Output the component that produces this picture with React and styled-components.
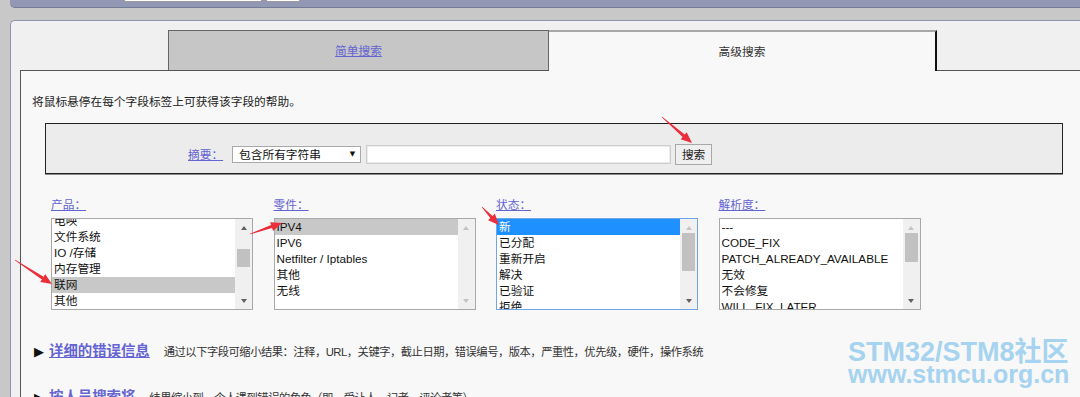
import React from 'react';
import styled, { createGlobalStyle } from 'styled-components';

const GlobalStyle = createGlobalStyle`
  html, body {
    margin: 0;
    padding: 0;
  }
  body {
    background: #c8c8c8;
    font-family: "Liberation Sans", "Noto Sans CJK SC", sans-serif;
    font-size: 11.7px;
    color: #222;
    overflow: hidden;
  }
`;

const Page = styled.div`
  position: relative;
  width: 1080px;
  height: 397px;
  overflow: hidden;
  padding-left: 10px;
  box-sizing: border-box;
`;

const TopBar = styled.div`
  height: 7px;
  background: #9298b4;
  border-bottom: 1px solid #747b97;
  border-bottom-left-radius: 5px;
  display: flex;
  align-items: flex-start;
  gap: 4px;
  padding-left: 114px;
`;

const BarField = styled.div`
  width: ${p => p.$w}px;
  height: 1px;
  background: #fff;
  border: 1px solid #9c9c9c;
  border-top: none;
`;

const Panel = styled.div`
  margin-top: 12px;
  background: #f0f0f0;
  border-top: 1px solid #8c94ae;
  border-left: 1px solid #8c94ae;
  border-top-left-radius: 5px;
  padding: 9px 0 0 9px;
  height: 400px;
`;

const Tabs = styled.div`
  display: flex;
  margin-left: 148px;
  height: 40px;
`;

const Tab = styled.div`
  position: relative;
  z-index: ${p => (p.$active ? 1 : 0)};
  box-sizing: border-box;
  width: ${p => (p.$active ? 388 : 381)}px;
  height: ${p => (p.$active ? 41 : 40)}px;
  display: flex;
  align-items: center;
  justify-content: center;
  background: ${p => (p.$active ? '#f8f8f8' : '#c6c6c6')};
  border-top: ${p => (p.$active ? '2px solid #a8a8a8' : '1px solid #666')};
  border-left: ${p => (p.$active ? 'none' : '1px solid #666')};
  border-right: ${p => (p.$active ? '2px solid #111' : '1px solid #666')};
  color: #333;
  line-height: 16px;
`;

const Link = styled.a`
  color: #6464d2;
  text-decoration: underline;
  cursor: pointer;
`;

const Content = styled.div`
  background: #f8f8f8;
  border-top: 1px solid #555;
  border-left: 1px solid #555;
  padding-top: 23px;
  height: 340px;
`;

const Help = styled.p`
  margin: 0 0 13px 11px;
  line-height: 16px;
  color: #222;
`;

const SummaryBox = styled.div`
  box-sizing: border-box;
  margin-left: 24px;
  width: 1018px;
  height: 51px;
  background: #ececec;
  border: 1px solid #222;
  box-shadow: 0 1px 0 #8a8a8a;
  padding: 12px 0 0 142px;
  display: flex;
  align-items: center;
`;

const FieldLabel = styled(Link)`
  line-height: 16px;
`;

const Select = styled.div`
  box-sizing: border-box;
  margin-left: 9px;
  width: 129px;
  height: 17px;
  background: #fff;
  border: 1px solid #a9a9a9;
  display: flex;
  align-items: center;
  justify-content: space-between;
  padding: 0 5px 0 6px;
  line-height: 15px;
  color: #111;
`;

const Caret = styled.span`
  font-family: "DejaVu Sans", sans-serif;
  font-size: 7px;
  color: #111;
`;

const TextInput = styled.div`
  box-sizing: border-box;
  margin-left: 5px;
  width: 305px;
  height: 19px;
  background: #fff;
  border: 1px solid #cdcdcd;
  box-shadow: inset 0 0 0 1px #ececec;
`;

const Button = styled.div`
  box-sizing: border-box;
  margin-left: 4px;
  width: 37px;
  height: 21px;
  background: #efefef;
  border: 1px solid #a8a8a8;
  display: flex;
  align-items: center;
  justify-content: center;
  color: #222;
  line-height: 16px;
`;

const Fields = styled.div`
  display: grid;
  grid-template-columns: repeat(4, 202px);
  column-gap: 20.5px;
  margin: 23px 0 0 30px;
`;

const Field = styled.div`
  display: flex;
  flex-direction: column;
  gap: 5px;
`;

const ListBox = styled.div`
  box-sizing: border-box;
  width: 202px;
  height: 92px;
  background: #fff;
  border: 1px solid ${p => (p.$focused ? '#6fa6e6' : '#a9a9a9')};
  display: flex;
  overflow: hidden;
`;

const Options = styled.div`
  flex: 1;
  overflow: hidden;
`;

const OptionList = styled.div`
  margin-top: ${p => p.$offset}px;
`;

const Option = styled.div`
  height: 16px;
  line-height: 16px;
  padding-left: 2px;
  white-space: nowrap;
  color: ${p => (p.$sel === 'focus' ? '#fff' : '#111')};
  background: ${p =>
    p.$sel === 'focus' ? '#1e90ff' : p.$sel === 'blur' ? '#c8c8c8' : 'transparent'};
`;

const ScrollBar = styled.div`
  width: 17px;
  background: #f0f0f0;
  display: flex;
  flex-direction: column;
`;

const ScrollButton = styled.div`
  height: 17px;
  display: flex;
  align-items: center;
  justify-content: center;
`;

const ScrollTrack = styled.div`
  flex: 1;
`;

const Thumb = styled.div`
  margin: ${p => p.$top}px 2px 0;
  height: ${p => p.$h}px;
  background: #c1c1c1;
`;

const ArrowGlyph = styled.span`
  width: 0;
  height: 0;
  border-left: 3.5px solid transparent;
  border-right: 3.5px solid transparent;
  ${p =>
    p.$dir === 'up'
      ? `border-bottom: 4px solid ${p.$on ? '#606060' : '#c3c3c3'};`
      : `border-top: 4px solid ${p.$on ? '#606060' : '#c3c3c3'};`}
`;

const Section = styled.div`
  display: flex;
  align-items: baseline;
  margin: ${p => p.$mt}px 0 0 13px;
  line-height: 20px;
  white-space: nowrap;
`;

const Bullet = styled.span`
  font-family: "DejaVu Sans", sans-serif;
  font-size: 13px;
  color: #111;
  margin-right: 5px;
`;

const SectionTitle = styled(Link)`
  font-size: 14.4px;
  font-weight: bold;
  margin-right: 14px;
`;

const SectionText = styled.span`
  font-size: 11.3px;
  letter-spacing: -0.5px;
  color: #333;
`;

const Watermark = styled.div`
  position: absolute;
  left: 848px;
  top: 340px;
  color: #a6d3ef;
  font-family: "Liberation Sans", "Noto Sans CJK SC", sans-serif;
  font-weight: bold;
  pointer-events: none;
`;

const WatermarkLine = styled.div`
  font-size: ${p => p.$size}px;
  line-height: ${p => p.$lh}px;
  white-space: nowrap;
`;

const Overlay = styled.svg`
  position: absolute;
  left: 0;
  top: 0;
  pointer-events: none;
`;

function arrowPoints([x1, y1], [x2, y2]) {
  const dx = x2 - x1;
  const dy = y2 - y1;
  const len = Math.hypot(dx, dy);
  const ux = dx / len;
  const uy = dy / len;
  const px = -uy;
  const py = ux;
  const head = 11;
  const bx = x2 - ux * head;
  const by = y2 - uy * head;
  const pt = (x, y, w) => `${(x + px * w).toFixed(1)},${(y + py * w).toFixed(1)}`;
  return [
    pt(x1, y1, 0.3),
    pt(bx, by, 1.6),
    pt(bx, by, 4.6),
    `${x2},${y2}`,
    pt(bx, by, -4.6),
    pt(bx, by, -1.6),
    pt(x1, y1, -0.3),
  ].join(' ');
}

const arrows = [
  [[662, 117], [692, 143]],
  [[15, 260], [52, 284]],
  [[250, 234], [282, 223]],
  [[482, 207], [499, 225]],
];

const lists = [
  {
    label: '产品：',
    items: ['电唤', '文件系统', 'IO /存储', '内存管理', '联网', '其他', '平台'],
    sel: 4,
    selType: 'blur',
    offset: -6,
    thumb: { top: 13, h: 18 },
    up: true,
    down: true,
  },
  {
    label: '零件：',
    items: ['IPV4', 'IPV6', 'Netfilter / Iptables', '其他', '无线'],
    sel: 0,
    selType: 'blur',
    offset: 0,
    thumb: null,
    up: false,
    down: false,
  },
  {
    label: '状态：',
    items: ['新', '已分配', '重新开启', '解决', '已验证', '拒绝'],
    sel: 0,
    selType: 'focus',
    offset: 0,
    thumb: { top: -3, h: 38 },
    up: false,
    down: true,
    focused: true,
  },
  {
    label: '解析度：',
    items: ['---', 'CODE_FIX', 'PATCH_ALREADY_AVAILABLE', '无效', '不会修复', 'WILL_FIX_LATER'],
    sel: -1,
    offset: 0,
    thumb: { top: -3, h: 29 },
    up: false,
    down: true,
  },
];

const MultiSelect = ({ list }) => (
  <ListBox $focused={list.focused}>
    <Options>
      <OptionList $offset={list.offset}>
        {list.items.map((item, i) => (
          <Option key={item} $sel={i === list.sel ? list.selType : null}>
            {item}
          </Option>
        ))}
      </OptionList>
    </Options>
    <ScrollBar>
      <ScrollButton>
        <ArrowGlyph $dir="up" $on={list.up} />
      </ScrollButton>
      <ScrollTrack>
        {list.thumb && <Thumb $top={list.thumb.top} $h={list.thumb.h} />}
      </ScrollTrack>
      <ScrollButton>
        <ArrowGlyph $dir="down" $on={list.down} />
      </ScrollButton>
    </ScrollBar>
  </ListBox>
);

export default function App() {
  return (
    <>
      <GlobalStyle />
      <Page>
        <TopBar>
          <BarField $w={136} />
          <BarField $w={32} />
        </TopBar>
        <Panel>
          <Tabs>
            <Tab>
              <Link>简单搜索</Link>
            </Tab>
            <Tab $active>高级搜索</Tab>
          </Tabs>
          <Content>
            <Help>将鼠标悬停在每个字段标签上可获得该字段的帮助。</Help>
            <SummaryBox>
              <FieldLabel>摘要：</FieldLabel>
              <Select>
                <span>包含所有字符串</span>
                <Caret>▼</Caret>
              </Select>
              <TextInput />
              <Button>搜索</Button>
            </SummaryBox>
            <Fields>
              {lists.map(list => (
                <Field key={list.label}>
                  <FieldLabel>{list.label}</FieldLabel>
                  <MultiSelect list={list} />
                </Field>
              ))}
            </Fields>
            <Section $mt={31}>
              <Bullet>▶</Bullet>
              <SectionTitle>详细的错误信息</SectionTitle>
              <SectionText>
                通过以下字段可缩小结果：注释，URL，关键字，截止日期，错误编号，版本，严重性，优先级，硬件，操作系统
              </SectionText>
            </Section>
            <Section $mt={25}>
              <Bullet>▶</Bullet>
              <SectionTitle>按人员搜索将</SectionTitle>
              <SectionText>结果缩小到一个人遇到错误的角色（即，受让人，记者，评论者等）</SectionText>
            </Section>
          </Content>
        </Panel>
        <Watermark>
          <WatermarkLine $size={27} $lh={24}>STM32/STM8社区</WatermarkLine>
          <WatermarkLine $size={25} $lh={20}>www.stmcu.org.cn</WatermarkLine>
        </Watermark>
        <Overlay width="1080" height="397" viewBox="0 0 1080 397">
          {arrows.map(([from, to], i) => (
            <polygon key={i} points={arrowPoints(from, to)} fill="#ea2e3a" />
          ))}
        </Overlay>
      </Page>
    </>
  );
}
